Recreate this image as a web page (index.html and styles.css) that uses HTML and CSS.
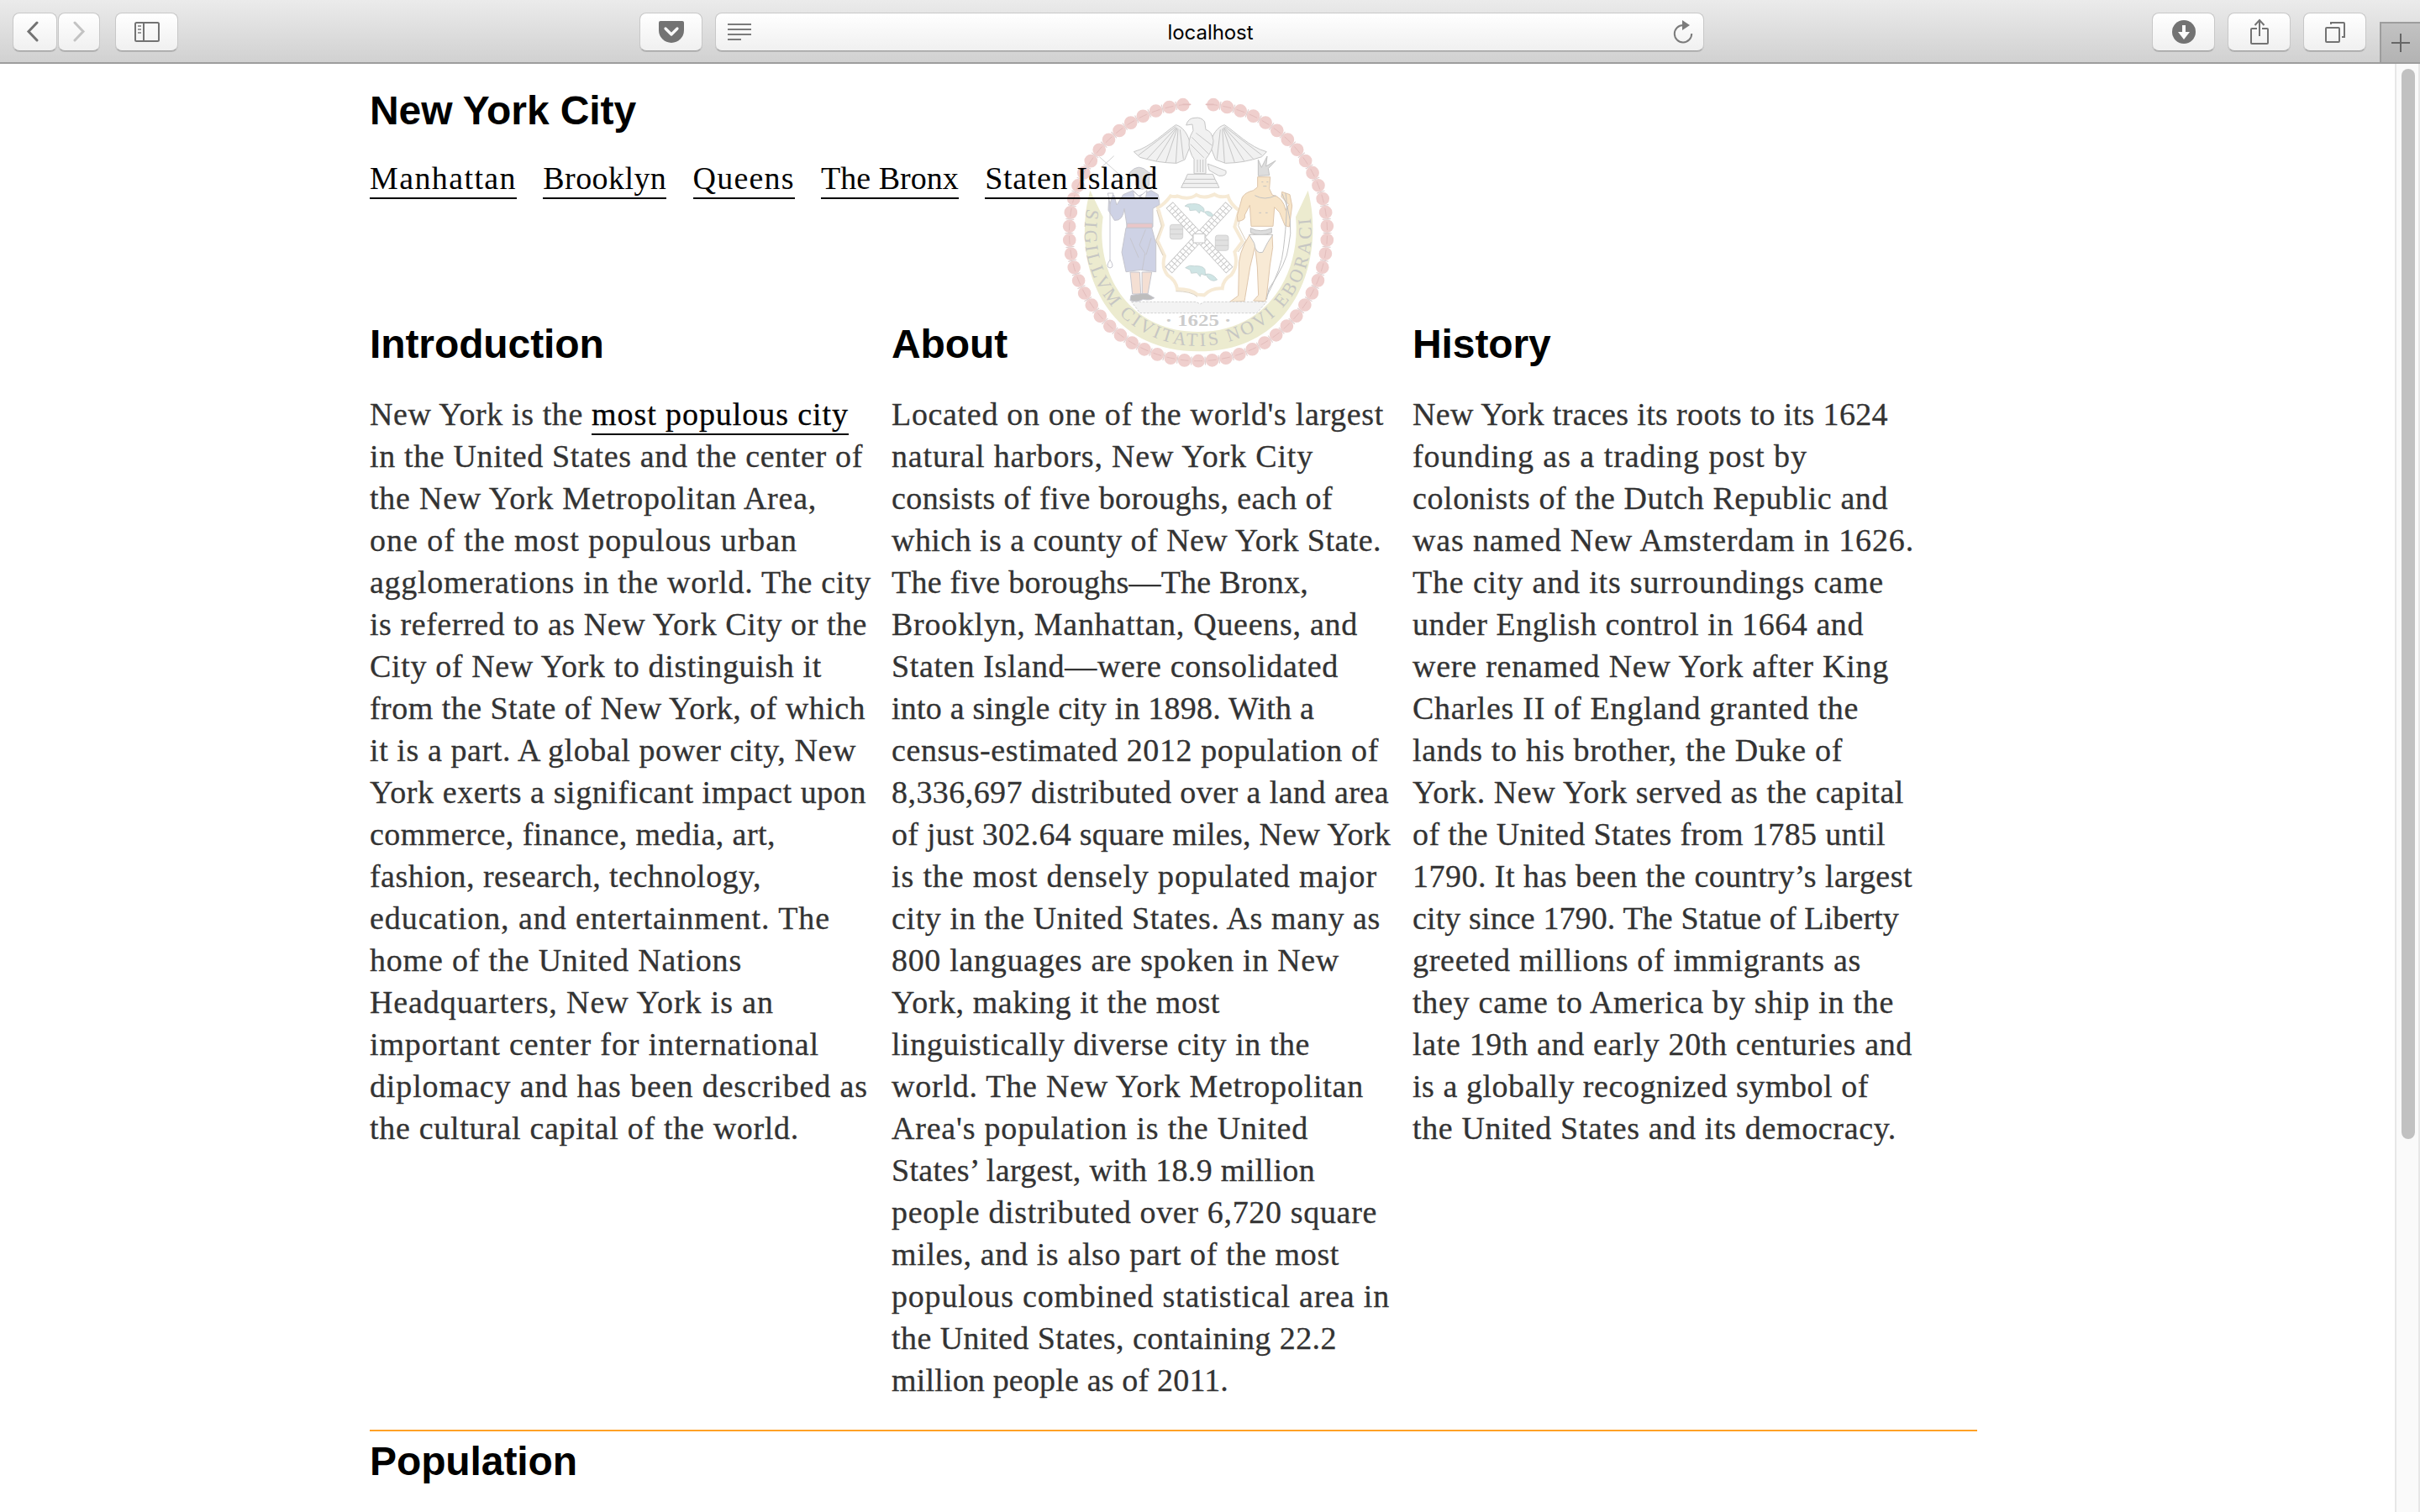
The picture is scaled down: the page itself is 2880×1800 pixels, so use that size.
FILE: index.html
```html
<!DOCTYPE html>
<html lang="en">
<head>
<meta charset="utf-8">
<title>New York City</title>
<link rel="stylesheet" href="styles.css">
</head>
<body>
<header class="toolbar">
  <div class="group history-buttons">
    <button class="btn back" aria-label="Back"><svg width="16" height="26" viewBox="0 0 16 26"><path d="M13 2 3 12.500 13 23" fill="none" stroke="#737373" stroke-width="3" stroke-linecap="round"/></svg></button>
    <button class="btn forward" aria-label="Forward"><svg width="16" height="26" viewBox="0 0 16 26"><path d="M3 2 13 12.500 3 23" fill="none" stroke="#c3c3c3" stroke-width="3" stroke-linecap="round"/></svg></button>
  </div>
  <button class="btn sidebar" aria-label="Sidebar"><svg width="30" height="24" viewBox="0 0 30 24"><rect x="1" y="1" width="28" height="22" rx="1.500" fill="none" stroke="#737373" stroke-width="2"/><path d="M11 1v22" stroke="#737373" stroke-width="2"/><path d="M4 5h4M4 9h4M4 13h4" stroke="#999" stroke-width="2"/></svg></button>
  <div class="address-group">
    <button class="btn pocket" aria-label="Pocket"><svg width="30" height="26" viewBox="0 0 30 26"><path d="M2 0h26q2 0 2 2v9a15 15 0 0 1-30 0V2q0-2 2-2z" fill="#737373"/><path d="m8 9 7 7 7-7" fill="none" stroke="#fafafa" stroke-width="3.200" stroke-linecap="round" stroke-linejoin="round"/></svg></button>
    <div class="address">
      <svg width="28" height="22" viewBox="0 0 28 22"><path d="M0 2h28M0 8h28M0 14h28M0 20h16" stroke="#7b7b7b" stroke-width="2"/></svg>
      <span class="host" data-width="102">localhost</span>
      <svg width="24" height="28" viewBox="0 0 24 28"><path d="M12 6a10.200 10.200 0 1 0 10.200 10" fill="none" stroke="#7b7b7b" stroke-width="2"/><path d="M11 0l9 6-9 6z" fill="#7b7b7b"/></svg>
    </div>
  </div>
  <div class="group actions">
    <button class="btn" aria-label="Downloads"><svg width="28" height="28" viewBox="0 0 28 28"><circle cx="14" cy="14" r="14" fill="#737373"/><path d="M12 6h4v8h5l-7 9-7-9h5z" fill="#fafafa"/></svg></button>
    <button class="btn" aria-label="Share"><svg width="24" height="32" viewBox="0 0 24 32"><path d="M9 12H3q-1 0-1 1v16q0 1 1 1h18q1 0 1-1V13q0-1-1-1h-6M12 21V3M6.500 8 12 2l5.500 6" fill="none" stroke="#737373" stroke-width="2"/></svg></button>
    <button class="btn" aria-label="Tabs"><svg width="26" height="26" viewBox="0 0 26 26"><rect x="2" y="8" width="16" height="17" rx="1" fill="none" stroke="#737373" stroke-width="2"/><path d="M8 4V2h15q1 0 1 1v16h-3" fill="none" stroke="#737373" stroke-width="2"/></svg></button>
  </div>
  <button class="new-tab" aria-label="New tab"><svg width="22" height="22" viewBox="0 0 22 22"><path d="M11 0v22M0 11h22" stroke="#666" stroke-width="2"/></svg></button>
</header>
<div class="viewport">
  <main class="page">
    <svg class="seal" viewBox="0 0 1110 1110" width="370" height="370" aria-hidden="true">
      <path d="M612 104A459 459 0 0 1 558 1019 459 459 0 0 1 504 104" pathLength="564" fill="none" stroke="#efcfcd" stroke-width="47" stroke-linecap="round" stroke-dasharray="0 10.068"/>
      <path d="M612 104A459 459 0 0 1 558 1019 459 459 0 0 1 504 104" pathLength="564" fill="none" stroke="#e3bdbc" stroke-width="3" stroke-dasharray="6 4.068" stroke-dashoffset="3"/>
      <path d="M530 103h-26M586 103h26" stroke="#e3bdbc" stroke-width="5" stroke-linecap="round"/>
      <path d="M612 104A459 459 0 0 1 558 1019 459 459 0 0 1 504 104" pathLength="564" fill="none" stroke="#e0cfcf" stroke-width="30" stroke-dasharray="0.700 9.368" stroke-dashoffset="-4.700"/>
      <path d="M172 410C105 650 205 985 558 985S1012 650 950 410L906 505C925 700 810 915 558 915S190 700 218 505Z" fill="#ecebcf"/>
      <path id="motto" d="M161 475A405 405 0 1 0 956 492" fill="none"/>
      <text class="motto"><textPath href="#motto" textLength="1410" lengthAdjust="spacing">SIGILLVM CIVITATIS NOVI EBORACI</textPath></text>
      <g stroke="#c6c6c6" stroke-width="3" fill="#f1f1f1" stroke-linejoin="round">
        <path d="M530 250C525 210 500 180 478 176 440 200 390 255 328 272L350 292 380 300 412 307 445 311 480 313 510 300Z"/>
        <path d="M600 250C605 210 630 180 652 176 690 200 740 255 802 272L785 290 752 300 720 307 690 311 655 313 620 300Z"/>
        <path d="M515 177l22-3 3 22q-22 35-12 70 8 25 15 32v52h42v-52q25-30 27-65-5-35-27-40l-4-28q-12-18-35-14-24 0-31 26z"/>
        <path d="M478 182 345 284M480 185 375 298M481 187 408 305M483 188 442 310M486 190 478 312M493 193 505 298M652 182 785 284M650 185 755 298M649 187 722 305M647 188 688 310M644 190 652 312M637 193 625 298M555 300v45M565 300v45M575 300v45M535 220l62 62M530 245l48 48M550 205l58 45" fill="none"/>
        <path d="M592 315l65 25q5 20-25 18l-35-20zM520 352h90l8 18 15 30H497l15-30zM512 370h106M503 385h125"/>
      </g>
      <path d="M555 782q-22-20-72-20-4-30-35-50-22-28-10-68l-26-55 20-55-18-62q25-14 45-42 15 4 24 0 42 16 68-4 28 16 65-2 20 14 48 6 8 28 40 52l-16 58 28 52-28 38q14 48-12 82-30 18-32 48-40-2-65 24z" fill="#fff" stroke="#f6ead5" stroke-width="12"/>
      <path d="M555 790q-22-20-77-20M410 480l17 58-20 52 25 52M715 480l-14 56 27 54-28 40" fill="none" stroke="#d9cfbf" stroke-width="3"/>
      <g fill="none">
        <path d="M455 462 L670 695M668 462 L452 695" stroke="#c5c5c5" stroke-width="34"/>
        <path d="M457 464 L668 693M666 464 L454 693" stroke="#fff" stroke-width="29" stroke-dasharray="12 3"/>
        <path d="M457 464 L668 693M666 464 L454 693" stroke="#c9c9c9" stroke-width="3"/>
        <path d="M540 565h42v32h-42z" fill="#fff" stroke="#c5c5c5" stroke-width="3"/>
      </g>
      <g fill="#e1e1e1" stroke="#c5c5c5" stroke-width="2"><rect x="457" y="532" width="46" height="52" rx="9"/><rect x="619" y="570" width="47" height="55" rx="9"/><path d="M457 549h46M457 566h46M619 588h47M619 607h47"/></g>
      <g fill="#cfe5e5" stroke="#bdcccc" stroke-width="2"><path d="M510 466q10-10 25-8 25-2 34 8 14 8 9 22l-12-6-4 10-12-12-22 2-3-12z"/><path d="M580 487q20-8 32 13-17 9-32-13zM512 686q15-12 32-6 30-2 38 12l2 22-16-6-3 10-12-14-20 2-4-12z"/><path d="M584 709q24-5 42 20-24 14-42-20z"/></g>
      <g stroke="#c6c6ce" stroke-width="3" stroke-linejoin="round">
        <path d="M205 290l90 80M215 325l42-38" fill="none" stroke="#d3d3d3"/>
        <path d="M315 345q30-35 65 0l15 8-12 6v32q-25 30-48 0v-32l-24-5z" fill="#ddd"/>
        <path d="M290 425l35-15 20 20 45-20 25 15 5 35-24 15v65h-92l-10-65q-5 45-35 42l-22-36 2-52 18-2 10 35z" fill="#ced2e5"/>
        <path d="M304 528h90v16h-92z" fill="#e9c6c8"/>
        <path d="M300 544h92l15 55v102l-55-7-52 7-15-70z" fill="#ced2e5"/>
        <path d="M370 550l-22 55 20 30-10 60M315 580l30 70M390 580l-18 60" fill="none"/>
        <path d="M315 702h34l4 78h-30zM357 702h35l-14 78h-20z" fill="#f4dfd3"/>
        <path d="M318 785l35-6 22 0 26 15q-15 10-40 5-20 12-46 4z" fill="#bdbdbd"/>
        <path d="M325 412l25 22-18 8zM375 410l-25 22 20 8zM235 420h20l-12 38z" fill="#fff"/>
        <path d="M243 455v205" fill="none"/><path d="M243 658q-18 26 0 29 18-3 0-29z" fill="#fff"/>
      </g>
      <g stroke="#dec6ac" stroke-width="3" stroke-linejoin="round">
        <path d="M770 362h45l-3 42 10 22q40 8 48 55l12-20-27-28 2-18 28 10 8 40-10 75-15-4-20-48-18-18-5 68h-78l-5-75-18 35q5 20-25 22l-2-20 18-65q10-18 40-25l15-12z" fill="#f7e4c8"/>
        <path d="M742 568h80l2 45-10 65-12 110-5 18-42-2 18-20-4-100-8-75-18 75-18 110-2 12-52 2 30-22 2-90q-5-60 39-128z" fill="#f8ead5"/>
      </g>
      <g stroke="#c2c2c2" stroke-width="3" fill="#ddd"><path d="M772 358l40-2-4-24 26-28-34 20 4-36-20 40-12-28z"/><path d="M745 545q35 18 75 0v16q-40 16-75 0z"/><path d="M740 568h84l-18 28-18 35q-25 8-30-32z" fill="#fff"/><path d="M858 422q45 95 22 190-5 55-70 150l-8 38M870 420q10 50-8 200-5 65-60 170" fill="none"/><path d="M760 428q35 20 75 0" fill="none"/><path d="M784 380h6M802 380h6M790 395h12M775 490h8M798 490h8" fill="none"/></g>
      <path d="M320 808h230l15 8 15-8h222l-35 40H350z" fill="#f3f3f3" stroke="#d2d2d2" stroke-width="3" stroke-dasharray="8 5"/>
      <text class="year" x="440" y="894" textLength="236" lengthAdjust="spacingAndGlyphs">· 1625 ·</text>
    </svg>
    <section class="intro">
      <h1>New York City</h1>
      <nav class="boroughs">
        <a class="link" data-width="175">Manhattan</a>
        <a class="link" data-width="147">Brooklyn</a>
        <a class="link" data-width="121">Queens</a>
        <a class="link" data-width="164">The Bronx</a>
        <a class="link" data-width="206">Staten Island</a>
      </nav>
    </section>
    <div class="columns">
      <article>
        <h2>Introduction</h2>
        <p>
          <span class="line"><span data-width="264">New York is the </span><a class="link" data-width="306">most populous city</a></span>
          <span class="line" data-width="587">in the United States and the center of</span>
          <span class="line" data-width="532">the New York Metropolitan Area,</span>
          <span class="line" data-width="509">one of the most populous urban</span>
          <span class="line" data-width="597">agglomerations in the world. The city</span>
          <span class="line" data-width="592">is referred to as New York City or the</span>
          <span class="line" data-width="538">City of New York to distinguish it</span>
          <span class="line" data-width="590">from the State of New York, of which</span>
          <span class="line" data-width="579">it is a part. A global power city, New</span>
          <span class="line" data-width="591">York exerts a significant impact upon</span>
          <span class="line" data-width="483">commerce, finance, media, art,</span>
          <span class="line" data-width="466">fashion, research, technology,</span>
          <span class="line" data-width="548">education, and entertainment. The</span>
          <span class="line" data-width="443">home of the United Nations</span>
          <span class="line" data-width="481">Headquarters, New York is an</span>
          <span class="line" data-width="535">important center for international</span>
          <span class="line" data-width="593">diplomacy and has been described as</span>
          <span class="line" data-width="511">the cultural capital of the world.</span>
        </p>
      </article>
      <article>
        <h2>About</h2>
        <p>
          <span class="line" data-width="586">Located on one of the world's largest</span>
          <span class="line" data-width="502">natural harbors, New York City</span>
          <span class="line" data-width="525">consists of five boroughs, each of</span>
          <span class="line" data-width="583">which is a county of New York State.</span>
          <span class="line" data-width="496">The five boroughs—The Bronx,</span>
          <span class="line" data-width="555">Brooklyn, Manhattan, Queens, and</span>
          <span class="line" data-width="532">Staten Island—were consolidated</span>
          <span class="line" data-width="503">into a single city in 1898. With a</span>
          <span class="line" data-width="580">census-estimated 2012 population of</span>
          <span class="line" data-width="592">8,336,697 distributed over a land area</span>
          <span class="line" data-width="594">of just 302.64 square miles, New York</span>
          <span class="line" data-width="578">is the most densely populated major</span>
          <span class="line" data-width="582">city in the United States. As many as</span>
          <span class="line" data-width="533">800 languages are spoken in New</span>
          <span class="line" data-width="391">York, making it the most</span>
          <span class="line" data-width="498">linguistically diverse city in the</span>
          <span class="line" data-width="562">world. The New York Metropolitan</span>
          <span class="line" data-width="496">Area's population is the United</span>
          <span class="line" data-width="504">States’ largest, with 18.9 million</span>
          <span class="line" data-width="578">people distributed over 6,720 square</span>
          <span class="line" data-width="533">miles, and is also part of the most</span>
          <span class="line" data-width="593">populous combined statistical area in</span>
          <span class="line" data-width="530">the United States, containing 22.2</span>
          <span class="line" data-width="401">million people as of 2011.</span>
        </p>
      </article>
      <article>
        <h2>History</h2>
        <p>
          <span class="line" data-width="566">New York traces its roots to its 1624</span>
          <span class="line" data-width="470">founding as a trading post by</span>
          <span class="line" data-width="566">colonists of the Dutch Republic and</span>
          <span class="line" data-width="597">was named New Amsterdam in 1626.</span>
          <span class="line" data-width="561">The city and its surroundings came</span>
          <span class="line" data-width="537">under English control in 1664 and</span>
          <span class="line" data-width="567">were renamed New York after King</span>
          <span class="line" data-width="531">Charles II of England granted the</span>
          <span class="line" data-width="512">lands to his brother, the Duke of</span>
          <span class="line" data-width="585">York. New York served as the capital</span>
          <span class="line" data-width="563">of the United States from 1785 until</span>
          <span class="line" data-width="595">1790. It has been the country’s largest</span>
          <span class="line" data-width="579">city since 1790. The Statue of Liberty</span>
          <span class="line" data-width="534">greeted millions of immigrants as</span>
          <span class="line" data-width="573">they came to America by ship in the</span>
          <span class="line" data-width="595">late 19th and early 20th centuries and</span>
          <span class="line" data-width="543">is a globally recognized symbol of</span>
          <span class="line" data-width="576">the United States and its democracy.</span>
        </p>
      </article>
    </div>
    <section class="population"><h2>Population</h2></section>
  </main>
  <aside class="scrollbar"><div class="thumb"></div></aside>
</div>
<script src="script.js"></script>
</body>
</html>
```
FILE: styles.css
```css
* { box-sizing: border-box; }
html, body { margin: 0; width: 2880px; height: 1800px; overflow: hidden; background: #fff; }
body { display: flex; flex-direction: column; }

/* Browser toolbar */
.toolbar { height: 76px; flex: none; display: flex; align-items: flex-start; padding: 15px 0 0 15px; background: linear-gradient(#ebebeb, #d1d1d1); border-bottom: 2px solid #9d9d9d; }
.group { display: flex; }
.history-buttons { gap: 1px; }
.btn { width: 75px; height: 46px; flex: none; padding: 0; display: flex; align-items: center; justify-content: center; border: 1px solid #c8c8c8; border-bottom-color: #a0a0a0; border-radius: 8px; background: linear-gradient(#fff, #f0f0f0); box-shadow: 0 1px 0 #bbb; }
.btn svg, .address svg, .new-tab svg { display: block; flex: none; }
.back { width: 53px; padding-right: 6px; }
.forward { width: 50px; }
.sidebar { margin-left: 18px; }
.address-group { display: flex; gap: 15px; margin-left: 549px; }
.address { width: 1177px; height: 46px; padding: 0 12px 0 14px; display: flex; align-items: center; justify-content: space-between; border: 1px solid #c8c8c8; border-bottom-color: #a0a0a0; border-radius: 8px; background: linear-gradient(#fff, #f0f0f0); box-shadow: 0 1px 0 #bbb; }
.host { font: 24px/30px Inter, "Liberation Sans", sans-serif; color: #000; white-space: pre; padding-top: 2px; margin-right: 4px; }
.actions { margin-left: 533px; gap: 15px; }
.new-tab { margin: 11px 0 0 auto; width: 48px; height: 48px; padding: 0; display: flex; align-items: center; justify-content: center; border: solid #9d9d9d; border-width: 2px 0 0 2px; background: linear-gradient(#c2c2c2, #b3b3b3); }

/* Page */
.viewport { flex: 1; min-height: 0; display: flex; }
.page { flex: 1; position: relative; padding: 16px 0 0 440px; overflow: hidden; font-family: "Palatino", "Liberation Serif", serif; font-size: 38px; line-height: 50px; color: #333; }
h1, h2 { margin: 0; font: bold 48px/56px "Liberation Sans", Arial, sans-serif; letter-spacing: -0.1px; color: #000; }
.seal { position: absolute; left: 1240px; top: 14px; }
.motto { font: 66px "Liberation Serif", serif; fill: #c6c6c3; }
.year { font: bold 56px "Liberation Serif", serif; fill: #ccc; }
.intro { position: relative; height: 278px; padding-top: 12px; }
.boroughs { display: flex; gap: 31.300px; margin-top: 27px; }
.link { display: inline-block; height: 50px; color: #000; white-space: pre; border-bottom: 2px solid #000; }
.columns { position: relative; display: grid; grid-template-columns: 621px 620px 640px; height: 1332px; padding-top: 12px; }
.columns p { margin: 30px 0 0; -webkit-text-stroke: 0.300px #333; }
.columns .link { -webkit-text-stroke-color: #000; }
.line { display: block; width: fit-content; height: 50px; white-space: pre; }
.line > span { display: inline-block; }
.line > * { vertical-align: top; }
.population { width: 1913px; border-top: 2px solid #ffa126; padding-top: 8px; }
.scrollbar { width: 30px; padding: 6px 4px 0 6px; border: solid #e7e7e7; border-width: 0 2px; background: #fafafa; }
.thumb { width: 16px; height: 1274px; border-radius: 8px; background: #c1c1c1; }
```
FILE: script.js
```js
// Tracks each line of copy to its measure.
document.querySelectorAll("[data-width]").forEach((el) => {
  const range = document.createRange();
  range.selectNodeContents(el);
  const natural = range.getBoundingClientRect().width;
  const spacing = (Number(el.dataset.width) - natural) / el.textContent.length;
  el.style.letterSpacing = spacing.toFixed(3) + "px";
});
```
